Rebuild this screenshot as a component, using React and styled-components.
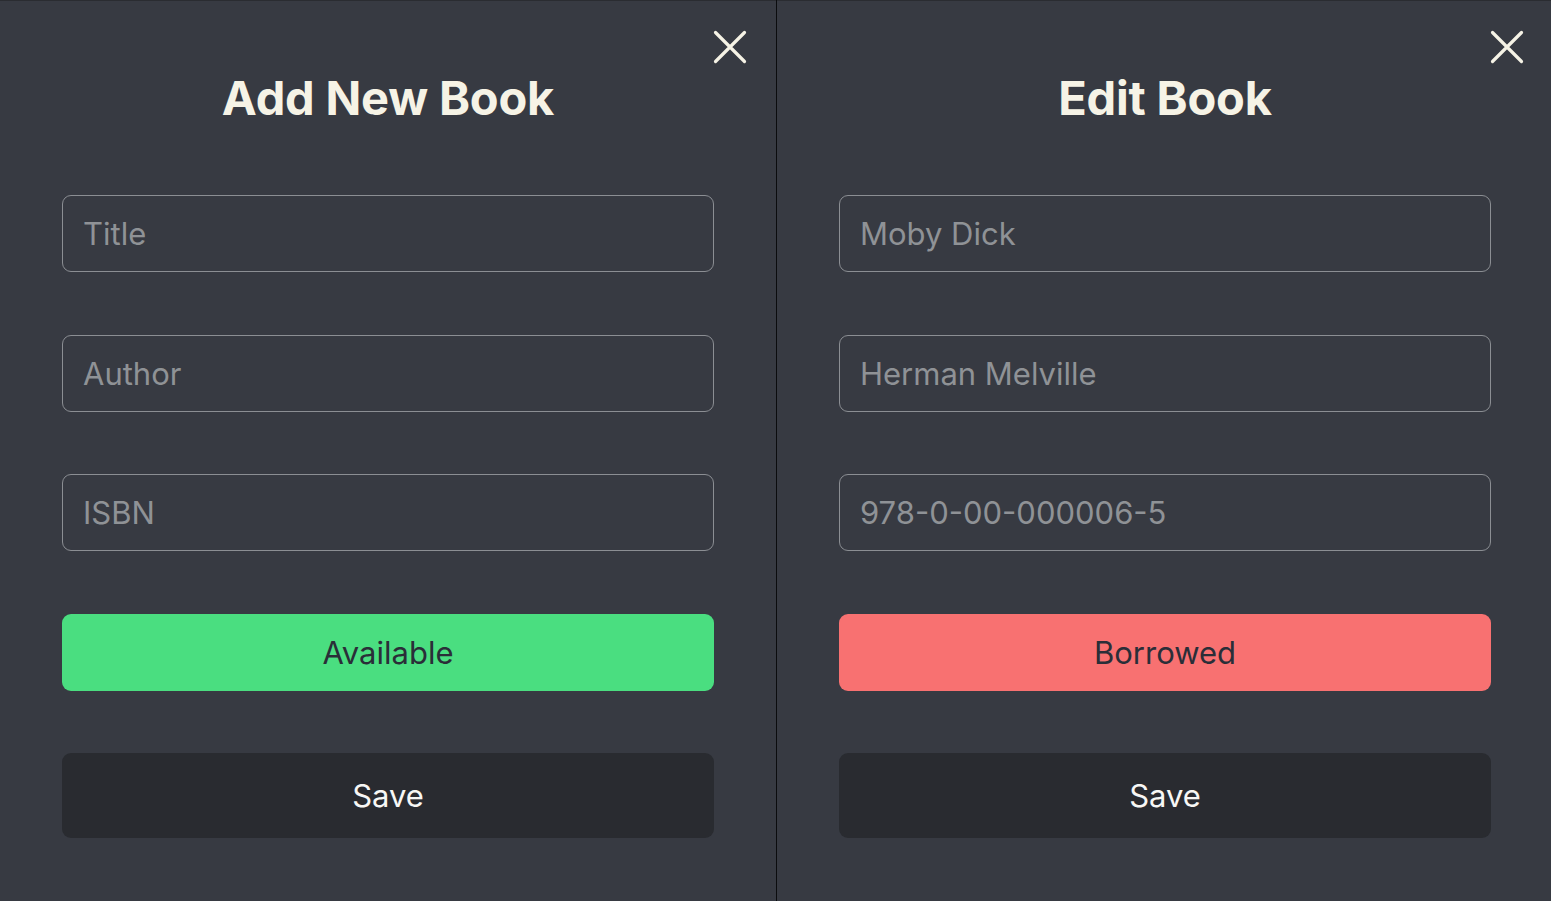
import React from "react";
import styled, { createGlobalStyle } from "styled-components";

const GlobalStyle = createGlobalStyle`
  html, body {
    margin: 0;
    padding: 0;
    background: #0b0c0e;
    font-family: Inter, "Noto Sans", sans-serif;
  }
`;

const Page = styled.div`
  display: grid;
  grid-template-columns: 776px 776px;
  column-gap: 1px;
  height: 901px;
  width: 1551px;
  overflow: hidden;
`;

const Panel = styled.section`
  position: relative;
  display: flex;
  flex-direction: column;
  background: #373a42;
  padding: 71px 62px 0 62px;
  box-shadow: inset 0 1px 0 #2a2c31;
`;

const Close = styled.button`
  position: absolute;
  top: 30px;
  right: 29px;
  width: 34px;
  height: 34px;
  padding: 0;
  border: none;
  background: transparent;
  cursor: pointer;
  svg {
    display: block;
  }
`;

const Title = styled.h2`
  margin: 0 0 71px 0;
  text-align: center;
  font-size: 47px;
  line-height: 53px;
  font-weight: 700;
  color: #f6f3e6;
  letter-spacing: -0.2px;
`;

const Form = styled.form`
  display: flex;
  flex-direction: column;
  gap: 62.5px;
`;

const Input = styled.input`
  box-sizing: border-box;
  height: 77px;
  width: 100%;
  padding: 0 20px;
  border: 1.5px solid #8b8e93;
  border-radius: 9px;
  background: transparent;
  color: #8f9296;
  font-family: Inter, "Noto Sans", sans-serif;
  font-size: 31px;
  outline: none;
  &::placeholder {
    color: #8f9296;
  }
`;

const Status = styled.button`
  height: 77px;
  border: none;
  border-radius: 9px;
  background: ${(p) => (p.$available ? "#4ade80" : "#f87171")};
  color: #2a2e38;
  font-family: Inter, "Noto Sans", sans-serif;
  font-size: 31px;
  cursor: pointer;
`;

const Save = styled.button`
  height: 85px;
  border: none;
  border-radius: 9px;
  background: #292b30;
  color: #f7f7f5;
  font-family: Inter, "Noto Sans", sans-serif;
  font-size: 31px;
  cursor: pointer;
`;

function CloseIcon() {
  return (
    <svg width="34" height="34" viewBox="0 0 34 34">
      <path
        d="M2.5 2.5 L31.5 31.5 M31.5 2.5 L2.5 31.5"
        stroke="#f6f3e6"
        strokeWidth="3.2"
        strokeLinecap="round"
        fill="none"
      />
    </svg>
  );
}

function BookModal({ title, book, available }) {
  return (
    <Panel>
      <Close type="button" aria-label="Close">
        <CloseIcon />
      </Close>
      <Title>{title}</Title>
      <Form onSubmit={(e) => e.preventDefault()}>
        <Input placeholder="Title" defaultValue={book.title} />
        <Input placeholder="Author" defaultValue={book.author} />
        <Input placeholder="ISBN" defaultValue={book.isbn} />
        <Status type="button" $available={available}>
          {available ? "Available" : "Borrowed"}
        </Status>
        <Save type="submit">Save</Save>
      </Form>
    </Panel>
  );
}

export default function App() {
  return (
    <>
      <GlobalStyle />
      <Page>
        <BookModal title="Add New Book" book={{}} available />
        <BookModal
          title="Edit Book"
          book={{
            title: "Moby Dick",
            author: "Herman Melville",
            isbn: "978-0-00-000006-5",
          }}
          available={false}
        />
      </Page>
    </>
  );
}
